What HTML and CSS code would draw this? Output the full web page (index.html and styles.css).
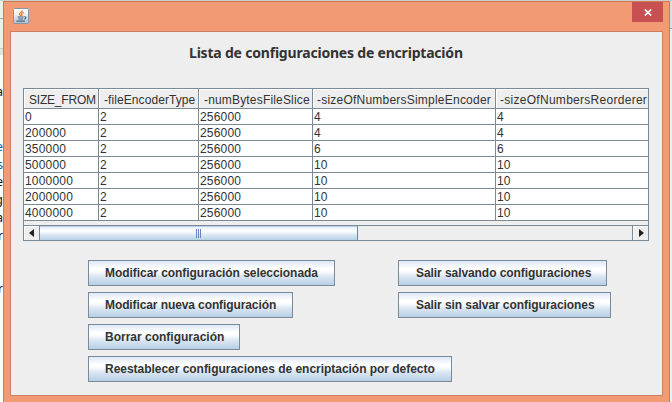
FILE: index.html
```html
<!DOCTYPE html>
<html lang="es">
<head>
<meta charset="utf-8">
<title>Lista de configuraciones de encriptación</title>
<link rel="stylesheet" href="styles.css">
</head>
<body>
<div class="desktop">
  <div class="behind">
    <span class="frag" style="--y:83px">a</span>
    <span class="frag link" style="--y:138px">e</span>
    <span class="frag link" style="--y:156px">s</span>
    <span class="frag" style="--y:173px">e</span>
    <span class="frag wavy" style="--y:191px">g</span>
    <span class="frag" style="--y:209px">a</span>
    <span class="frag" style="--y:227px">r</span>
    <span class="frag" style="--y:280px">r</span>
  </div>
  <div class="window">
    <header class="titlebar">
      <svg class="app-icon" width="16" height="16" viewBox="0 0 16 16">
        <defs><linearGradient id="tile" x1="0" y1="0" x2="0" y2="1"><stop offset="0" stop-color="#fff"/><stop offset=".45" stop-color="#e9edf0"/><stop offset="1" stop-color="#abc0cf"/></linearGradient></defs>
        <rect x=".5" y=".5" width="15" height="15" rx="1" fill="url(#tile)" stroke="#8795a1"/>
        <path d="M9.2 2.3C9.8 4 6 4.6 6.5 6.4L8 8M10.8 4.4C8.6 5.1 8.1 5.9 9 7L8.6 8.2" fill="none" stroke="#e87928" stroke-width="1.2"/>
        <path d="M4.5 9h6.2M5.2 11h5M3.4 13.1h8.5M11.3 8.8c2.5-.2 1.9 2-.2 2.4" fill="none" stroke="#45657f" stroke-width="1.1"/>
      </svg>
      <button class="close" aria-label="Cerrar"><svg width="8" height="7" viewBox="0 0 8 7"><path d="M.8.5l6.4 6M7.2.5l-6.4 6" stroke="#fff" stroke-width="1.7"/></svg></button>
    </header>
    <main class="content">
      <h1>Lista de configuraciones de encriptación</h1>
      <section class="pane">
        <table>
          <colgroup><col class="c1"><col class="c2"><col class="c3"><col class="c4"><col class="c5"></colgroup>
          <thead><tr><th class="h1">SIZE_FROM</th><th class="h2">-fileEncoderType</th><th class="h3">-numBytesFileSlice</th><th class="h4">-sizeOfNumbersSimpleEncoder</th><th class="h5">-sizeOfNumbersReordererEncoder</th></tr></thead>
          <tbody>
            <tr><td>0</td><td>2</td><td>256000</td><td>4</td><td>4</td></tr>
            <tr><td>200000</td><td>2</td><td>256000</td><td>4</td><td>4</td></tr>
            <tr><td>350000</td><td>2</td><td>256000</td><td>6</td><td>6</td></tr>
            <tr><td>500000</td><td>2</td><td>256000</td><td>10</td><td>10</td></tr>
            <tr><td>1000000</td><td>2</td><td>256000</td><td>10</td><td>10</td></tr>
            <tr><td>2000000</td><td>2</td><td>256000</td><td>10</td><td>10</td></tr>
            <tr><td>4000000</td><td>2</td><td>256000</td><td>10</td><td>10</td></tr>
          </tbody>
        </table>
        <div class="scrollbar">
          <span class="arrow"><svg width="5" height="8" viewBox="0 0 5 8"><path d="M5 0v8L0 4z" fill="#222"/></svg></span>
          <span class="thumb"><i></i><i></i><i></i></span>
          <span class="arrow end"><svg width="5" height="8" viewBox="0 0 5 8"><path d="M0 0v8l5-4z" fill="#222"/></svg></span>
        </div>
      </section>
      <div class="actions">
        <div class="col left">
          <button class="btn b1">Modificar configuración seleccionada</button>
          <button class="btn b2">Modificar nueva configuración</button>
          <button class="btn b3">Borrar configuración</button>
          <button class="btn b4">Reestablecer configuraciones de encriptación por defecto</button>
        </div>
        <div class="col right">
          <button class="btn b5">Salir salvando configuraciones</button>
          <button class="btn b6">Salir sin salvar configuraciones</button>
        </div>
      </div>
    </main>
  </div>
  <div class="behind-right"></div>
</div>
</body>
</html>
```
FILE: styles.css
```css
* { box-sizing: border-box; }
body { margin: 0; width: 672px; height: 402px; overflow: hidden; font: 12px/15px "Liberation Sans", Arial, sans-serif; color: #333; }
button { font: inherit; color: inherit; }
.desktop { display: flex; height: 402px; padding-top: 1px; background: #cdcdcd; }

.behind { position: relative; width: 3px; overflow: hidden; background: linear-gradient(#eee 17px, #aaa 17px 18px, #eee 18px 47px, #ccc 47px 48px, #e4e4e4 48px 54px, #fff 54px); }
.frag { position: absolute; top: var(--y); right: 0; font: 12px/15px "Noto Sans", sans-serif; color: #111; }
.link { color: #0868b8; }
.wavy { text-decoration: underline #d22; }
.behind-right { width: 2px; background: linear-gradient(#dedede 27px, #999 27px 28px, #eee 28px); }

.window { width: 667px; height: 402px; padding: 0 6px; background: #f19a74; border: 1px solid #ca7856; border-bottom: 0; }
.titlebar { display: flex; justify-content: space-between; height: 29px; padding-left: 3px; }
.app-icon { margin-top: 6px; }
.close { display: flex; align-items: center; justify-content: center; width: 31px; height: 20px; margin: 0; padding: 0 0 0 1px; border: 0; background: #c75050; }
.content { width: 653px; height: 365px; border: 1px solid #cb815f; background: #eee; }
h1 { margin: 13px 0 0 178px; height: 43px; font: bold 14px/16px "Noto Sans", sans-serif; letter-spacing: -.2px; white-space: nowrap; }

.pane { width: 626px; height: 153px; margin-left: 12px; border: 1px solid #7a8a99; }
table { width: 624px; table-layout: fixed; border-collapse: separate; border-spacing: 0; }
.c1 { width: 75px; } .c2 { width: 100px; } .c3 { width: 114px; } .c4 { width: 183px; } .c5 { width: 152px; }
th, td { padding: 0; text-align: left; white-space: nowrap; overflow: hidden; font-weight: normal; border-right: 1px solid #7a8a99; border-bottom: 1px solid #7a8a99; }
th:last-child, td:last-child { border-right: 0; }
th { height: 20px; padding: 3px 0 0 5px; line-height: 16px; background: #eee; box-shadow: inset 1px 1px #fff; }
.h1 { letter-spacing: -.2px; } .h2 { letter-spacing: .08px; } .h3 { letter-spacing: .17px; } .h4 { letter-spacing: .22px; padding-left: 4px; } .h5 { letter-spacing: .28px; padding-left: 4px; }
td { height: 16px; padding: 1px 0 0 1px; line-height: 14px; letter-spacing: .2px; background: #fff; }

.scrollbar { display: flex; height: 15px; margin-top: 4px; border-top: 1px solid #7a8a99; background: #eee; }
.arrow { display: flex; align-items: center; width: 16px; padding-left: 5px; border-right: 1px solid #7a8a99; box-shadow: inset 1px 1px #fff; }
.arrow.end { margin-left: auto; padding-left: 6px; border: 0; border-left: 1px solid #7a8a99; }
.thumb { display: flex; justify-content: center; align-items: center; gap: 1px; width: 318px; border-right: 1px solid #6382bf; background: linear-gradient(#b8cfe5 1px, #e6effa 1px, #fff 35%, #dfeaf5 60%, #b8cfe5); }
.thumb i { width: 1px; height: 9px; background: #6382bf; }

.actions { display: flex; padding: 19px 0 0 77px; }
.col { display: flex; flex-direction: column; align-items: flex-start; gap: 6px; }
.left { width: 310px; }
.btn { height: 26px; padding: 0 0 0 16px; border: 1px solid #7a8a99; text-align: left; font-weight: bold; white-space: nowrap; background: linear-gradient(#dfe8f8, #fff 32%, #fdfeff 42%, #d9e6f2 65%, #b8cfe5); }
.right .btn { padding-left: 17px; }
.b1 { width: 247px; letter-spacing: -.05px; } .b2 { width: 205px; letter-spacing: -.1px; } .b3 { width: 152px; } .b4 { width: 364px; flex: none; letter-spacing: -.03px; }
.b5 { width: 209px; letter-spacing: -.07px; } .b6 { width: 213px; letter-spacing: -.07px; }
```
